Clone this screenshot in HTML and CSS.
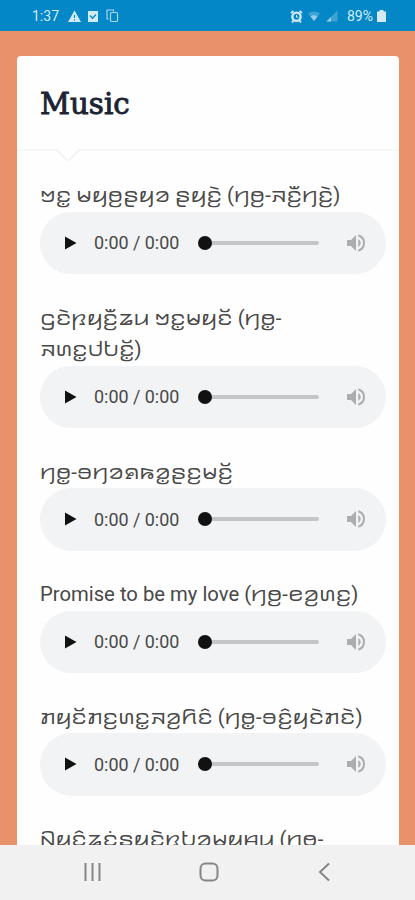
FILE: index.html
```
<!DOCTYPE html>
<html lang="en">
<head>
<meta charset="utf-8">
<title>Music</title>
<link rel="stylesheet" href="styles.css">
</head>
<body>
<svg class="sprite" width="0" height="0">
  <symbol id="speaker" viewBox="0 0 20 20"><path d="M1 7v6h4l5 5V2L5 7z"/><path d="M12.3 6v8a4.5 4.5 0 0 0 0-8zM12.3 1.3v2.1a7 7 0 0 1 0 13.2v2.1a9 9 0 0 0 0-17.4z"/></symbol>
  <symbol id="play" viewBox="0 0 12 14"><path d="M0 0.5v13L11.5 7z"/></symbol>
</svg>
<div class="screen">
  <header class="status">
    <span class="clock">1:37</span>
    <svg class="warn" width="13" height="13" viewBox="0 0 13 13"><path d="M6.5.5 13 12H0z" fill="currentColor"/><path d="M6.5 5v3M6.5 9.3v1.3" stroke="#0487c6" stroke-width="1.2"/></svg>
    <svg class="check" width="10" height="13" viewBox="0 0 10 13"><path d="M0 1h10v11H0z" fill="currentColor"/><path d="m2 5.5 2.5 2.7L8 4.5" fill="none" stroke="#0487c6" stroke-width="1.3"/></svg>
    <svg class="copy" width="13" height="14" viewBox="0 0 13 14" fill="none" stroke="currentColor" stroke-width="1.2"><rect x="4.500" y="3.500" width="7" height="9" rx="1"/><path d="M2.500 10H1V1h6.500v1.500"/></svg>
    <span class="gap"></span>
    <svg class="alarm" width="13" height="13" viewBox="0 0 13 13"><circle cx="6.500" cy="6.800" r="5.300" fill="currentColor"/><path d="m1 3 2.500-2M12 3 9.500 1M2 12.500l1.500-2M11 12.500l-1.500-2" stroke="currentColor" stroke-width="1.800"/><circle cx="6.500" cy="6.800" r="3" fill="#0487c6"/><path d="M6.500 5v2.200H8.200" fill="none" stroke="currentColor"/></svg>
    <svg class="wifi" width="12" height="10" viewBox="0 0 12 10"><path d="M0 2.500Q6-1.500 12 2.500L6 10z" fill="currentColor" opacity=".4"/><path d="M2.500 5.500Q6 3 9.500 5.500L6 10z" fill="currentColor"/></svg>
    <svg class="signal" width="12" height="12" viewBox="0 0 12 12"><path d="M11.500.500v11H.500z" fill="currentColor" opacity=".4"/><path d="M5 7v4.500H.500z" fill="currentColor"/></svg>
    <span class="percent">89%</span>
    <svg class="battery" width="9" height="12" viewBox="0 0 9 12"><path d="M2.500 0h4v1.500H9V12H0V1.500h2.500z" fill="currentColor"/></svg>
  </header>
  <main class="page">
    <section class="card">
      <div class="head"><h1>Music</h1><svg class="notch" width="26" height="14" viewBox="0 0 26 14"><path d="M1 0 13 12 25 0" fill="#fefefe" stroke="#f1f1f1" stroke-width="1.500"/></svg></div>
      <div class="list">
        <article><p>ꤠꤢ꤭ ꤗꤟꤥ꤬ꤔꤟꤤ ꤔꤟꤢꤧ꤬ (ꤚꤥ꤬-ꤏꤢꤪ꤬ꤚꤢꤧ꤬)</p><div class="player"><svg class="play"><use href="#play"/></svg><span class="time">0:00 / 0:00</span><span class="track"></span><svg class="vol"><use href="#speaker"/></svg></div></article>
        <article><p>ꤞꤢꤧꤐꤟꤢꤪ꤬ꤘꤣ ꤠꤢ꤭ꤗꤟꤢꤩ (ꤚꤥ꤭-<br>ꤏꤛꤢ꤭ꤓꤝꤢꤩ꤭)</p><div class="player"><svg class="play"><use href="#play"/></svg><span class="time">0:00 / 0:00</span><span class="track"></span><svg class="vol"><use href="#speaker"/></svg></div></article>
        <article><p>ꤚꤥ꤭-ꤋꤚꤤꤎꤒꤤ꤭ꤔꤢ꤬ꤗꤢꤩ꤬</p><div class="player"><svg class="play"><use href="#play"/></svg><span class="time">0:00 / 0:00</span><span class="track"></span><svg class="vol"><use href="#speaker"/></svg></div></article>
        <article><p>Promise to be my love (ꤚꤥ꤬-ꤕꤤ꤬ꤛꤢ꤬)</p><div class="player"><svg class="play"><use href="#play"/></svg><span class="time">0:00 / 0:00</span><span class="track"></span><svg class="vol"><use href="#speaker"/></svg></div></article>
        <article><p>ꤊꤟꤢꤩꤊꤢ꤬ꤛꤢ꤭ꤏꤤ꤬ꤖꤢꤨ (ꤚꤥ꤭-ꤋꤢꤨ꤬ꤟꤢꤧꤊꤢꤧ)</p><div class="player"><svg class="play"><use href="#play"/></svg><span class="time">0:00 / 0:00</span><span class="track"></span><svg class="vol"><use href="#speaker"/></svg></div></article>
        <article><p>ꤡꤟꤢꤨꤘꤢꤦꤔꤟꤢꤧꤐꤝꤤꤗꤟꤌꤣ (ꤚꤥ-</p></article>
      </div>
    </section>
  </main>
  <nav class="navbar">
    <svg width="20" height="20" viewBox="0 0 20 20"><path d="M2.500 1v18M9.500 1v18M16.500 1v18"/></svg>
    <svg width="20" height="20" viewBox="0 0 20 20"><rect x="1.500" y="1.500" width="17" height="17" rx="5"/></svg>
    <svg width="20" height="20" viewBox="0 0 20 20"><path d="M14 1.500 5 10l9 8.500"/></svg>
  </nav>
</div>
</body>
</html>
```
FILE: styles.css
```
* { box-sizing: border-box; }
body { margin: 0; font-family: Roboto, "Noto Sans Kayah Li", sans-serif; color: #484848; }
.sprite { display: block; }
.screen { width: 415px; height: 900px; display: flex; flex-direction: column; overflow: hidden; }
.status { flex: none; height: 31px; background: #0487c6; color: #d3ebf6; display: flex; align-items: center; padding: 1px 29px 0 32px; font-size: 14px; }
.clock { width: 36px; }
.check { margin-left: 7px; }
.copy { margin-left: 8px; opacity: .8; }
.gap { flex: 1; }
.wifi { margin-left: 5px; opacity: .7; }
.signal { margin-left: 6px; opacity: .7; }
.percent { margin: 0 4px 0 9px; }
.page { flex: 1; min-height: 0; overflow: hidden; background: #e8916a; padding: 25px 16px 0 17px; }
.card { background: #fefefe; border-radius: 4px; height: 1000px; }
.head { position: relative; height: 95px; border-bottom: 2px solid #f7f7f7; padding: 30px 24px 0 23px; }
h1 { margin: 0; font: 400 29.300px/36px "DejaVu Serif", serif; color: #1b2334; -webkit-text-stroke: .9px #1b2334; }
.notch { position: absolute; left: 38px; top: 93px; }
.list { padding: 29px 13px 0 23px; }
article { margin-bottom: 28.500px; }
p { margin: 0; font-size: 20.250px; line-height: 31.500px; white-space: nowrap; }
.player { height: 62.500px; width: 346px; background: #f1f3f4; border-radius: 32px; display: flex; align-items: center; padding: 0 20px 0 25px; }
.play { width: 12px; height: 14px; fill: #111; }
.time { font-size: 17.900px; width: 98px; margin-left: 17px; white-space: nowrap; }
.track { flex: none; width: 127px; height: 4px; border-radius: 2px; background: linear-gradient(to right, transparent 12px, #c4c5c6 12px); position: relative; }
.track::before { content: ""; position: absolute; left: 5.500px; top: -5px; width: 14px; height: 14px; border-radius: 50%; background: #111; }
.vol { width: 20px; height: 20px; margin-left: auto; fill: #acadae; }
.navbar { flex: none; height: 55px; background: #f1f1f1; display: flex; justify-content: space-between; align-items: center; padding: 0 80px 2px 83px; }
.navbar svg { fill: none; stroke: #858585; stroke-width: 2; }
```
